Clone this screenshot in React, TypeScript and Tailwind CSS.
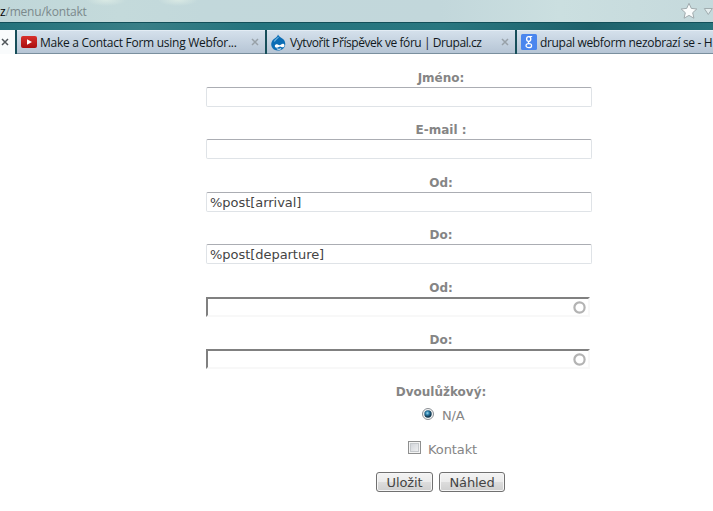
import React from 'react';

const tabText = "whitespace-nowrap pt-[2px] font-['Open_Sans','Noto_Sans',sans-serif] text-[12px] leading-[20px] text-[#101820]";

function Close({ dark = false }: { dark?: boolean }) {
  return (
    <svg width="8" height="8" viewBox="0 0 8 8" className="shrink-0">
      <path d="M1 1l6 6M7 1L1 7" stroke={dark ? '#50565a' : '#98a1a8'} strokeWidth="1.5" />
    </svg>
  );
}

function YouTubeIcon() {
  return (
    <svg width="16" height="12" viewBox="0 0 16 12" className="shrink-0">
      <defs>
        <linearGradient id="yt" x1="0" y1="0" x2="0" y2="1">
          <stop offset="0" stopColor="#d8302b" />
          <stop offset="1" stopColor="#a90f10" />
        </linearGradient>
      </defs>
      <rect width="16" height="12" rx="2" fill="url(#yt)" />
      <path d="M6 3.3v5.4L11 6z" fill="#fff" />
    </svg>
  );
}

function DrupalIcon() {
  return (
    <svg width="15" height="17" viewBox="0 0 15 17" className="shrink-0">
      <path d="M7 0.5C8 3 10 3.2 12 5c3.6 3.2 2.6 8.300-.6 10.300-2.600 1.700-6.200 1.600-8.500.1C-.6 13-.6 8 2.600 5.200 4.500 3.600 6.500 3 7 .5z" fill="#0b6db5" />
      <path d="M3.300 7.500C4.500 5.200 6.500 4.500 7.500 3" stroke="#6fb4df" strokeWidth="1.200" fill="none" />
      <path d="M3.800 11.800c.3-1.500 2-1.900 3.300-1.100 1.300.7 1.900.7 3-.2 1.500-1.200 3.500-.7 3.400 1.100 0 1.800-1.900 2.200-3.100 1.300-1-.7-1.600-.7-2.600.1-1.500 1.100-4.200 1-4-1.200z" fill="#fff" />
      <path d="M5.800 14.700c1.300.8 3 .8 4.300-.1" stroke="#fff" strokeWidth="1" fill="none" />
    </svg>
  );
}

function GoogleIcon() {
  return (
    <svg width="16" height="16" viewBox="0 0 16 16" className="shrink-0">
      <rect width="16" height="16" rx="1.500" fill="#4a86ee" />
      <g fill="none" stroke="#fff">
        <ellipse cx="7.700" cy="5" rx="2.100" ry="2.400" strokeWidth="1.300" />
        <path d="M8 2.500h3.200M8.600 7.300C6.500 8.300 7.200 9 8.600 9.600" strokeWidth="1.100" />
        <ellipse cx="7.800" cy="11.700" rx="2.800" ry="2" strokeWidth="1.200" />
      </g>
    </svg>
  );
}

function Browser() {
  return (
    <header className="h-[54px] overflow-hidden bg-[#25737c]">
      <div className="flex h-[23px] items-center border-b border-[#124f59] bg-[radial-gradient(ellipse_20px_6px_at_106px_0px,#d9e9e4,transparent),radial-gradient(ellipse_20px_6px_at_178px_0px,#d9e9e4,transparent),linear-gradient(90deg,#c0d7d9_0px,#c4dadb_120px,#c2d8db_205px,#c2d7db_440px,#cbdfe0_560px,#c5d9dc_713px)]">
        <span className="h-[22px] w-[680px] whitespace-nowrap font-['Open_Sans','Noto_Sans',sans-serif] text-[12px] leading-[24px] tracking-[-0.2px] text-[#7b898c]">
          <span className="text-black">z</span>/menu/kontakt
        </span>
        <svg width="33" height="22" viewBox="0 0 33 22" className="shrink-0">
          <path d="M9 3.300l2.300 5.100 5.500.6-4.100 3.700 1.200 5.500L9 15.400l-4.900 2.800 1.200-5.500L1.200 9l5.500-.6z" fill="#fafcfc" stroke="#a0aaad" strokeWidth="1" />
          <path d="M24.300 8.500h8l-4 6z" fill="#e5eeef" stroke="#a0acaf" strokeWidth="1" />
        </svg>
      </div>
      <div className="h-[7px] bg-[linear-gradient(90deg,#24727b,#397f87_20%,#24747e_36%,#297780_62%,#1e626c_83%,#28727b)]" />
      <div className="flex h-[24px] w-[713px] gap-[2px] bg-[#164e5a]">
        <div className="flex w-[15px] shrink-0 items-center bg-[#f9fbfc] pl-px"><Close dark /></div>
        <div className="flex w-[248px] shrink-0 items-center border-t border-b border-t-[#e3ecf4] border-b-[#7a8f9e] bg-linear-to-b from-[#d4e0eb] to-[#b6c5d5] pl-[4px]">
          <YouTubeIcon />
          <span className={`${tabText} ml-[3px] w-[211px] tracking-[-0.27px]`}>Make a Contact Form using Webfor...</span>
          <Close />
        </div>
        <div className="flex w-[248px] shrink-0 items-center border-t border-b border-t-[#e3ecf4] border-b-[#7a8f9e] bg-linear-to-b from-[#d4e0eb] to-[#b6c5d5] pl-[4px]">
          <DrupalIcon />
          <span className={`${tabText} ml-[4px] w-[211px] tracking-[-0.43px]`}>Vytvořit Příspěvek ve fóru | Drupal.cz</span>
          <Close />
        </div>
        <div className="flex flex-1 items-center border-t border-b border-t-[#e3ecf4] border-b-[#7a8f9e] bg-linear-to-b from-[#d4e0eb] to-[#b6c5d5] pl-[4px]">
          <GoogleIcon />
          <span className={`${tabText} ml-[3px] tracking-[-0.33px]`}>drupal webform nezobrazí se - H</span>
        </div>
      </div>
    </header>
  );
}

function Label({ children }: { children: React.ReactNode }) {
  return <label className="block h-[20px] text-center text-[12px] font-bold leading-[22px] text-[#858585]">{children}</label>;
}

function Field({ label, value = '', className = '' }: { label: string; value?: string; className?: string }) {
  return (
    <div className={className}>
      <Label>{label}</Label>
      <input defaultValue={value} className="block h-[20px] w-[386px] rounded-[2px] border border-[#dfe3e7] border-t-[#abadb3] bg-white px-[3px] text-[13px] tracking-[-0.04px] text-[#444] outline-none" />
    </div>
  );
}

function DateField({ label, className = '' }: { label: string; className?: string }) {
  return (
    <div className={className}>
      <Label>{label}</Label>
      <div className="flex h-[20px] w-[384px] items-center justify-end border-2 border-t-[#808080] border-r-[#f8f8f8] border-b-[#f8f8f8] border-l-[#808080] pr-[2px]">
        <svg width="13" height="13" viewBox="0 0 13 13">
          <circle cx="6.500" cy="6.500" r="5.100" fill="none" stroke="#b3b3b3" strokeWidth="2.200" />
        </svg>
      </div>
    </div>
  );
}

const buttonClass = 'h-[20px] rounded-[3px] border border-[#707070] bg-[linear-gradient(#f3f3f3_0%,#ebebeb_50%,#dddddd_50%,#cfcfcf_100%)] pt-px text-center text-[13px] leading-[18px] tracking-[-0.1px] text-[#444] shadow-[inset_0_0_0_1px_#f6f6f6]';

export default function App() {
  return (
    <div className="h-[511px] w-[713px] overflow-hidden bg-white font-['DejaVu_Sans',sans-serif]">
      <Browser />
      <form className="ml-[206px] w-[470px] pt-[13px]">
        <Field label="Jméno:" className="h-[52px]" />
        <Field label="E-mail :" className="h-[53px]" />
        <Field label="Od:" value="%post[arrival]" className="h-[52px]" />
        <Field label="Do:" value="%post[departure]" className="h-[53px]" />
        <DateField label="Od:" className="h-[52px]" />
        <DateField label="Do:" className="h-[52px]" />
        <Label>Dvoulůžkový:</Label>
        <div className="mt-[3px] flex h-[20px] items-center pl-[216px]">
          <svg width="12" height="12" viewBox="0 0 12 12">
            <defs>
              <radialGradient id="dot" cx="42%" cy="38%">
                <stop offset="0" stopColor="#9edbf0" />
                <stop offset=".5" stopColor="#2b7eaa" />
                <stop offset="1" stopColor="#123850" />
              </radialGradient>
            </defs>
            <circle cx="6" cy="6" r="5.500" fill="#f4f5f6" stroke="#8b8f94" />
            <circle cx="6" cy="6" r="3.700" fill="url(#dot)" />
          </svg>
          <span className="ml-[8px] mt-[3px] text-[13px] leading-[20px] tracking-[-0.2px] text-[#858585]">N/A</span>
        </div>
        <div className="mt-[13px] flex h-[20px] items-center pl-[202px]">
          <span className="size-[13px] border border-[#8e8f8f] bg-linear-to-br from-[#cbcfd5] to-[#f6f6f6] shadow-[inset_0_0_0_1px_#f4f4f4,inset_0_0_0_2px_#c5c9cc]" />
          <span className="ml-[7px] mt-[5px] text-[13px] leading-[20px] tracking-[-0.1px] text-[#858585]">Kontakt</span>
        </div>
        <div className="mt-[15px] flex gap-[6px] pl-[170px]">
          <button type="button" className={`${buttonClass} w-[57px]`}>Uložit</button>
          <button type="button" className={`${buttonClass} w-[66px]`}>Náhled</button>
        </div>
      </form>
    </div>
  );
}
